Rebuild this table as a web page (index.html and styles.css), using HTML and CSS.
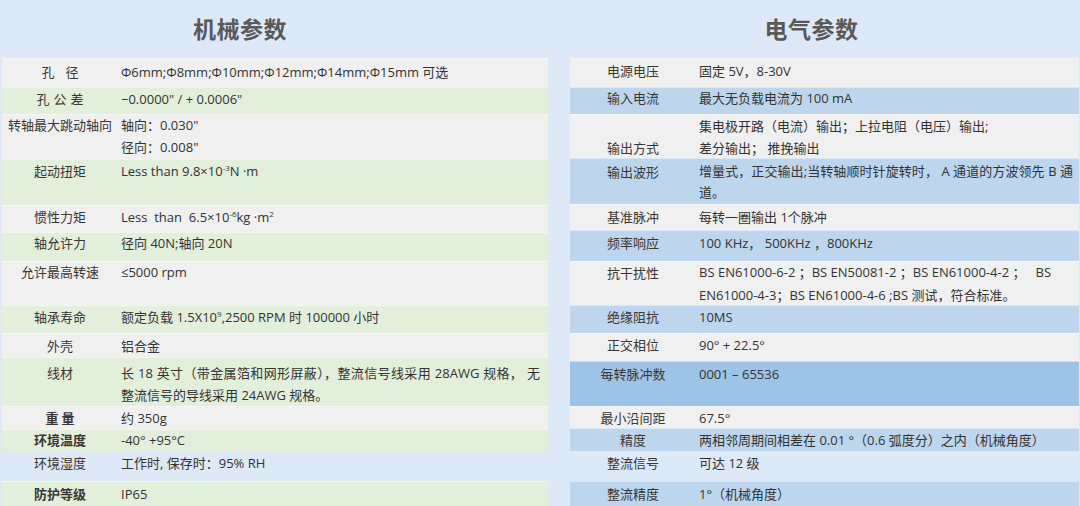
FILE: index.html
```html
<!DOCTYPE html>
<html lang="zh">
<head>
<meta charset="utf-8">
<title>机械参数 / 电气参数</title>
<link rel="stylesheet" href="styles.css">
</head>
<body>
<div class="page">
  <section class="col col-mech">
    <h2 class="title">机械参数</h2>
    <div class="tbl mech">
      <div class="row gray"><div class="lbl sp">孔&nbsp;径</div><div class="val">Φ6mm;Φ8mm;Φ10mm;Φ12mm;Φ14mm;Φ15mm 可选</div></div>
      <div class="row green"><div class="lbl sp">孔公差</div><div class="val">−0.0000" / + 0.0006"</div></div>
      <div class="row gray"><div class="lbl">转轴最大跳动轴向</div><div class="val">轴向：0.030"<br>径向：0.008"</div></div>
      <div class="row green"><div class="lbl">起动扭矩</div><div class="val">Less than 9.8×10<sup>-3</sup>N ·m</div></div>
      <div class="row gray"><div class="lbl">惯性力矩</div><div class="val">Less&nbsp; than&nbsp; 6.5×10<sup>-6</sup>kg ·m<sup>2</sup></div></div>
      <div class="row green"><div class="lbl">轴允许力</div><div class="val">径向 40N;轴向 20N</div></div>
      <div class="row gray"><div class="lbl">允许最高转速</div><div class="val">≤5000 rpm</div></div>
      <div class="row green"><div class="lbl">轴承寿命</div><div class="val">额定负载 1.5X10<sup>9</sup>,2500 RPM 时 100000 小时</div></div>
      <div class="row gray"><div class="lbl">外壳</div><div class="val">铝合金</div></div>
      <div class="row green"><div class="lbl">线材</div><div class="val">长 18 英寸（带金属箔和网形屏蔽），整流信号线采用 28AWG 规格， 无整流信号的导线采用 24AWG 规格。</div></div>
      <div class="row gray"><div class="lbl b">重&nbsp;量</div><div class="val">约 350g</div></div>
      <div class="row green"><div class="lbl b">环境温度</div><div class="val">-40° +95°C</div></div>
      <div class="row clear"><div class="lbl">环境湿度</div><div class="val">工作时, 保存时：95% RH</div></div>
      <div class="row green"><div class="lbl b">防护等级</div><div class="val">IP65</div></div>
    </div>
  </section>
  <section class="col col-elec">
    <h2 class="title">电气参数</h2>
    <div class="tbl elec">
      <div class="row gray"><div class="lbl">电源电压</div><div class="val">固定 5V，8-30V</div></div>
      <div class="row blue"><div class="lbl">输入电流</div><div class="val">最大无负载电流为 100 mA</div></div>
      <div class="row gray"><div class="lbl low">输出方式</div><div class="val">集电极开路（电流）输出；上拉电阻（电压）输出;<br>差分输出； 推挽输出</div></div>
      <div class="row blue"><div class="lbl">输出波形</div><div class="val">增量式，正交输出;当转轴顺时针旋转时， A 通道的方波领先 B 通道。</div></div>
      <div class="row gray"><div class="lbl">基准脉冲</div><div class="val">每转一圈输出 1个脉冲</div></div>
      <div class="row blue"><div class="lbl">频率响应</div><div class="val">100 KHz，&nbsp;500KHz ，800KHz</div></div>
      <div class="row gray"><div class="lbl">抗干扰性</div><div class="val plain">BS EN61000-6-2 ；BS EN50081-2 ；BS EN61000-4-2 ；&nbsp;&nbsp;&nbsp;BS<br>EN61000-4-3；BS EN61000-4-6 ;BS 测试，符合标准。</div></div>
      <div class="row blue"><div class="lbl">绝缘阻抗</div><div class="val">10MS</div></div>
      <div class="row gray"><div class="lbl">正交相位</div><div class="val">90° + 22.5°</div></div>
      <div class="row deep"><div class="lbl">每转脉冲数</div><div class="val">0001 – 65536</div></div>
      <div class="row gray"><div class="lbl">最小沿间距</div><div class="val">67.5°</div></div>
      <div class="row blue"><div class="lbl">精度</div><div class="val">两相邻周期间相差在 0.01 °（0.6 弧度分）之内（机械角度）</div></div>
      <div class="row clear"><div class="lbl">整流信号</div><div class="val">可达 12 级</div></div>
      <div class="row blue"><div class="lbl">整流精度</div><div class="val">1°（机械角度）</div></div>
    </div>
  </section>
</div>
</body>
</html>
```

FILE: styles.css
```css
* { box-sizing: border-box; }

html, body {
  margin: 0;
  padding: 0;
  background: #dde9f6;
}

body {
  width: 1080px;
  height: 506px;
  overflow: hidden;
  font-family: "Open Sans", "Noto Sans CJK SC", sans-serif;
  font-size: 13px;
  color: #333333;
}

.page {
  display: flex;
  gap: 22px;
  padding-left: 2px;
}

.col-mech { width: 546px; }
.col-elec { width: 509px; }

.title {
  margin: 0;
  height: 58px;
  padding-bottom: 2px;
  display: flex;
  align-items: center;
  justify-content: center;
  font-family: "Noto Sans CJK SC", sans-serif;
  font-size: 23px;
  font-weight: 700;
  color: #595959;
  letter-spacing: 0.5px;
}

.col-mech .title { padding-right: 70px; }
.col-elec .title { padding-right: 26px; }

.tbl {
  display: flex;
  flex-direction: column;
}

.row {
  display: grid;
  line-height: 22px;
  box-shadow: inset 0 1px 0 rgba(255, 255, 255, 0.45);
}

.mech .row { grid-template-columns: 116px 1fr; }
.elec .row { grid-template-columns: 126px 1fr; }

.gray  { background: #f0f0f0; }
.green { background: #e2efda; }
.blue  { background: #bdd6ee; }
.deep  { background: #9dc3e6; }
.clear { background: transparent; box-shadow: none; }

.lbl {
  text-align: center;
  font-family: "Noto Sans CJK SC", sans-serif;
  color: #3a3633;
  white-space: nowrap;
}

.lbl.sp { letter-spacing: 4px; text-indent: 4px; }
.lbl.b { font-weight: 700; }
.lbl.low { padding-top: 22px; }

.val {
  padding-left: 3px;
  text-align: justify;
}

.val.plain {
  text-align: left;
  white-space: nowrap;
}

.mech .val { padding-right: 8px; }
.elec .val { padding-right: 6px; }

sup {
  font-size: 8px;
  line-height: 0;
  vertical-align: 5px;
}

/* row heights and text offsets — 机械参数 */
.mech .row:nth-child(1)  { height: 29px; padding-top: 3px; }
.mech .row:nth-child(2)  { height: 27px; padding-top: 1px; }
.mech .row:nth-child(3)  { height: 45px; padding-top: 0; }
.mech .row:nth-child(4)  { height: 46px; padding-top: 1px; }
.mech .row:nth-child(5)  { height: 27px; padding-top: 1px; }
.mech .row:nth-child(6)  { height: 29px; padding-top: 0; }
.mech .row:nth-child(7)  { height: 44px; padding-top: 0; }
.mech .row:nth-child(8)  { height: 28px; padding-top: 1px; }
.mech .row:nth-child(9)  { height: 24px; padding-top: 2px; }
.mech .row:nth-child(10) { height: 49px; padding-top: 5px; }
.mech .row:nth-child(11) { height: 23px; padding-top: 1px; }
.mech .row:nth-child(12) { height: 22px; padding-top: 0; }
.mech .row:nth-child(13) { height: 30px; padding-top: 1px; }
.mech .row:nth-child(14) { height: 25px; padding-top: 2px; }

/* row heights and text offsets — 电气参数 */
.elec .row:nth-child(1)  { height: 29px; padding-top: 2px; }
.elec .row:nth-child(2)  { height: 27px; padding-top: 0; }
.elec .row:nth-child(3)  { height: 44px; padding-top: 1px; }
.elec .row:nth-child(4)  { height: 46px; padding-top: 3px; line-height: 21px; }
.elec .row:nth-child(5)  { height: 26px; padding-top: 2px; }
.elec .row:nth-child(6)  { height: 31px; padding-top: 2px; }
.elec .row:nth-child(7)  { height: 44px; padding-top: 0; line-height: 23px; }
.elec .row:nth-child(8)  { height: 28px; padding-top: 1px; }
.elec .row:nth-child(9)  { height: 28px; padding-top: 1px; }
.elec .row:nth-child(10) { height: 45px; padding-top: 2px; }
.elec .row:nth-child(11) { height: 22px; padding-top: 1px; }
.elec .row:nth-child(12) { height: 23px; padding-top: 1px; }
.elec .row:nth-child(13) { height: 30px; padding-top: 1px; }
.elec .row:nth-child(14) { height: 25px; padding-top: 2px; }
```
